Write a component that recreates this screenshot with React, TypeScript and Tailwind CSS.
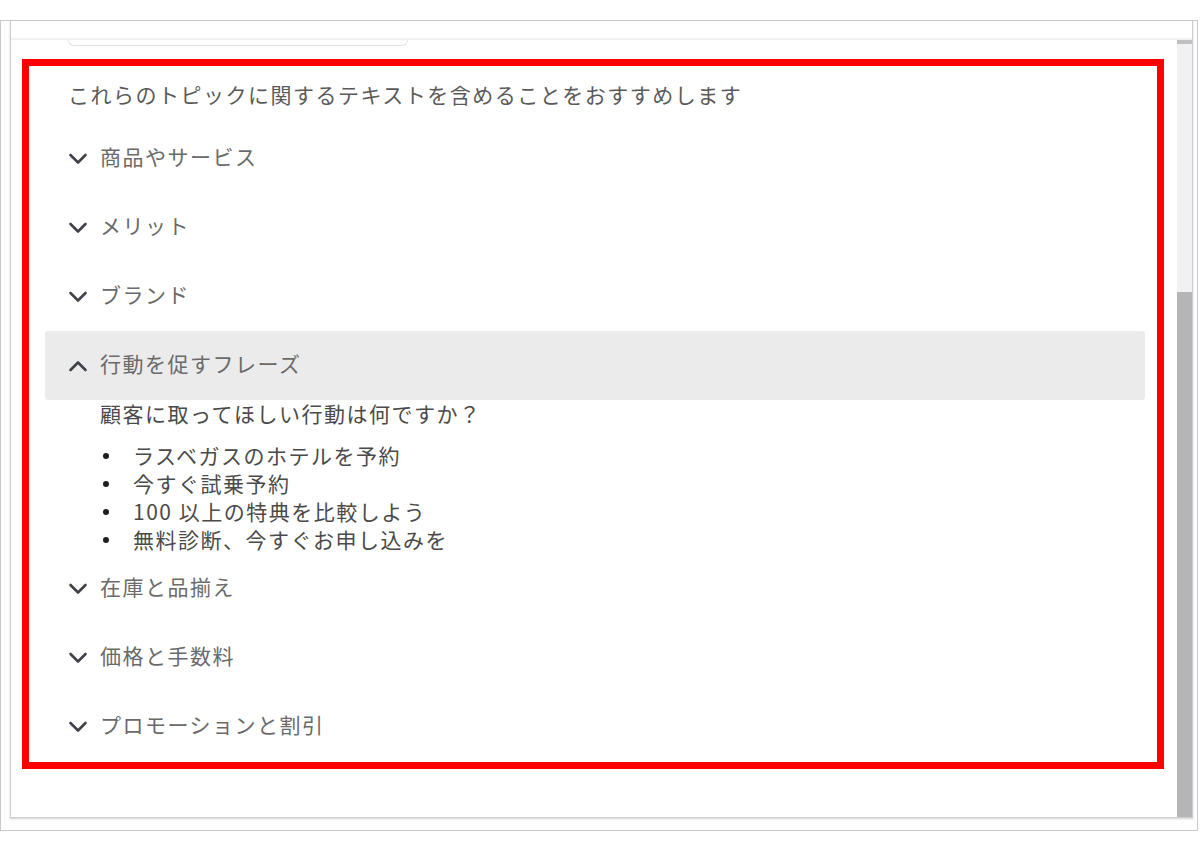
import React from "react";

const Chevron = ({ up = false }: { up?: boolean }) => (
  <svg width="20" height="12" viewBox="0 0 20 12" className="shrink-0">
    <polyline
      points={up ? "2.5,10 10,2.5 17.5,10" : "2.5,2 10,9.5 17.5,2"}
      fill="none"
      stroke="#3f4349"
      strokeWidth="2.6"
      strokeLinecap="round"
      strokeLinejoin="round"
    />
  </svg>
);

const Row = ({ label, open = false }: { label: string; open?: boolean }) => (
  <div
    className={`h-[69px] flex items-center pl-[23px] gap-[12px] ${
      open ? "bg-[#ebebeb] rounded-[3px]" : ""
    }`}
  >
    <Chevron up={open} />
    <span className="text-[#6a6a6a] pb-[3px]">{label}</span>
  </div>
);

export default function App() {
  const font = {
    fontFamily: '"Noto Sans CJK JP", "Noto Sans", sans-serif',
  } as React.CSSProperties;
  return (
    <div className="w-[1200px] h-[851px] bg-white pt-[20px]" style={font}>
      <div className="w-[1198px] h-[811px] border border-[#c9c9c9] bg-white pl-[9px] pr-[4px] pb-[12px]">
        <div className="h-full border-l border-r border-b border-[#cdcdcd] shadow-[0_1px_2px_rgba(0,0,0,0.18)] flex flex-col">
          <div className="h-[19px] shrink-0 border-b-2 border-[#f1f1f1]" />
          <div className="flex-1 flex min-h-0">
            <div className="flex-1 flex flex-col">
              <div className="ml-[57px] w-[340px] h-[6px] border-x border-b border-[#e2e2e2] rounded-b-[8px]" />
              <div className="mt-[13px] ml-[11px] w-[1142px] h-[710px] border-[7px] border-[#ff0000] text-[21px] tracking-[1.5px]">
                <div className="pl-[39px] pt-[13px] h-[45px] leading-[30px] text-[#5a5a5a]">
                  これらのトピックに関するテキストを含めることをおすすめします
                </div>
                <div className="mt-[13px] ml-[16px] mr-[12px]">
                  <Row label="商品やサービス" />
                  <Row label="メリット" />
                  <Row label="ブランド" />
                  <Row label="行動を促すフレーズ" open />
                  <div className="pl-[55px] text-[#4a4a4a]">
                    <div className="pt-[1px] pb-[2px] leading-[24px]">
                      顧客に取ってほしい行動は何ですか？
                    </div>
                    <div className="mt-[15px]">
                      {[
                        "ラスベガスのホテルを予約",
                        "今すぐ試乗予約",
                        "100 以上の特典を比較しよう",
                        "無料診断、今すぐお申し込みを",
                      ].map((t) => (
                        <div key={t} className="h-[28px] flex items-center">
                          <span className="ml-[3px] w-[6px] h-[6px] rounded-full bg-[#1e1e1e]" />
                          <span className="ml-[24px] leading-[28px] pb-[3px]">{t}</span>
                        </div>
                      ))}
                    </div>
                  </div>
                  <Row label="在庫と品揃え" />
                  <Row label="価格と手数料" />
                  <Row label="プロモーションと割引" />
                </div>
              </div>
            </div>
            <div className="w-[15px] bg-[#f1f1f3] flex flex-col">
              <div className="h-[4px] bg-[#c0c0c2]" />
              <div className="h-[248px]" />
              <div className="flex-1 bg-[#b5b5b7]" />
            </div>
          </div>
        </div>
      </div>
    </div>
  );
}
